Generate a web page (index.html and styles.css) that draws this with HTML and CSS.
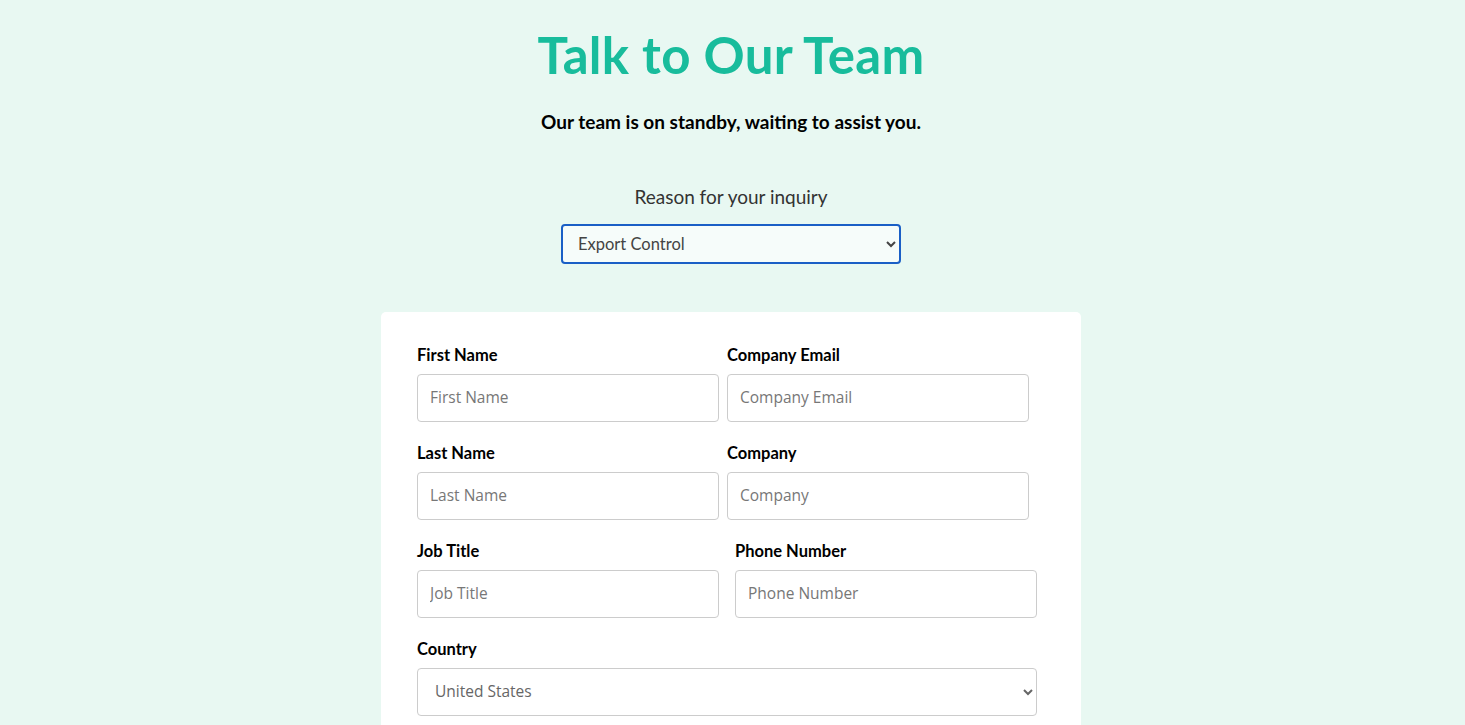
FILE: index.html
```html
<!DOCTYPE html>
<html lang="en">
<head>
    <meta charset="UTF-8">
    <meta name="viewport" content="width=device-width, initial-scale=1.0">
    <title>Talk to Our Team</title>
    <link rel="stylesheet" href="styles.css">
</head>
<body>
    <div class="hero">
        <h1>Talk to Our Team</h1>
        <p class="lead">Our team is on standby, waiting to assist you.</p>

        <!-- Inquiry reason -->
        <label class="reason-label" for="reason">Reason for your inquiry</label>
        <select class="reason-select" id="reason">
            <option>Export Control</option>
            <option>Sales</option>
            <option>Support</option>
        </select>
    </div>

    <!-- Contact form -->
    <form class="card">
        <div class="row">
            <div class="field">
                <label for="first">First Name</label>
                <input type="text" id="first" placeholder="First Name">
            </div>
            <div class="field">
                <label for="email">Company Email</label>
                <input type="email" id="email" placeholder="Company Email">
            </div>
        </div>
        <div class="row">
            <div class="field">
                <label for="last">Last Name</label>
                <input type="text" id="last" placeholder="Last Name">
            </div>
            <div class="field">
                <label for="company">Company</label>
                <input type="text" id="company" placeholder="Company">
            </div>
        </div>
        <div class="row wide">
            <div class="field">
                <label for="job">Job Title</label>
                <input type="text" id="job" placeholder="Job Title">
            </div>
            <div class="field">
                <label for="phone">Phone Number</label>
                <input type="tel" id="phone" placeholder="Phone Number">
            </div>
        </div>
        <div class="field full">
            <label for="country">Country</label>
            <select id="country" class="country-select">
                <option>United States</option>
                <option>Canada</option>
                <option>United Kingdom</option>
            </select>
        </div>
    </form>
</body>
</html>
```
FILE: styles.css
```css
/* Global styles */
body {
    margin: 0;
    padding: 0 3px 0 0;
    font-family: 'Lato', sans-serif;
    background: #e8f8f2;
    color: #000;
}

/* Header */
.hero {
    display: flex;
    flex-direction: column;
    align-items: center;
    text-align: center;
    padding-top: 24px;
}

h1 {
    margin: 0;
    font-size: 51px;
    font-weight: 700;
    color: #18bc9c;
    line-height: 62px;
    letter-spacing: 0.3px;
}

.lead {
    margin: 24px 0 0;
    font-size: 19px;
    font-weight: 700;
    line-height: 24px;
}

.reason-label {
    margin-top: 51px;
    font-size: 19px;
    color: #333;
    line-height: 24px;
}

.reason-select {
    margin-top: 15px;
    width: 340px;
    height: 40px;
    padding: 0 10px 0 11px;
    font-family: 'Lato', sans-serif;
    font-size: 16.5px;
    color: #444;
    background-color: #f6fcfa;
    border: 2px solid #1a5fc6;
    border-radius: 4px;
}

/* Form card */
.card {
    width: 628px;
    margin: 48px auto 0;
    padding: 33px 36px 20px;
    background: #fff;
    border-radius: 5px;
}

.row {
    display: flex;
    gap: 8px;
}

.row.wide {
    gap: 16px;
}

.field {
    display: flex;
    flex-direction: column;
    width: 302px;
    margin-bottom: 21px;
}

.field.full {
    width: 620px;
}

.field label {
    font-size: 16.5px;
    font-weight: 700;
    line-height: 20px;
    margin-bottom: 9px;
}

.field input,
.country-select {
    box-sizing: border-box;
    height: 48px;
    padding: 0 12px 3px;
    font-family: 'Open Sans', sans-serif;
    font-size: 15.5px;
    color: #333;
    border: 1px solid #ccc;
    border-radius: 4px;
    background: #fff;
}

.field input::placeholder {
    color: #777;
}

.country-select {
    padding-left: 13px;
    color: #666;
}
```
